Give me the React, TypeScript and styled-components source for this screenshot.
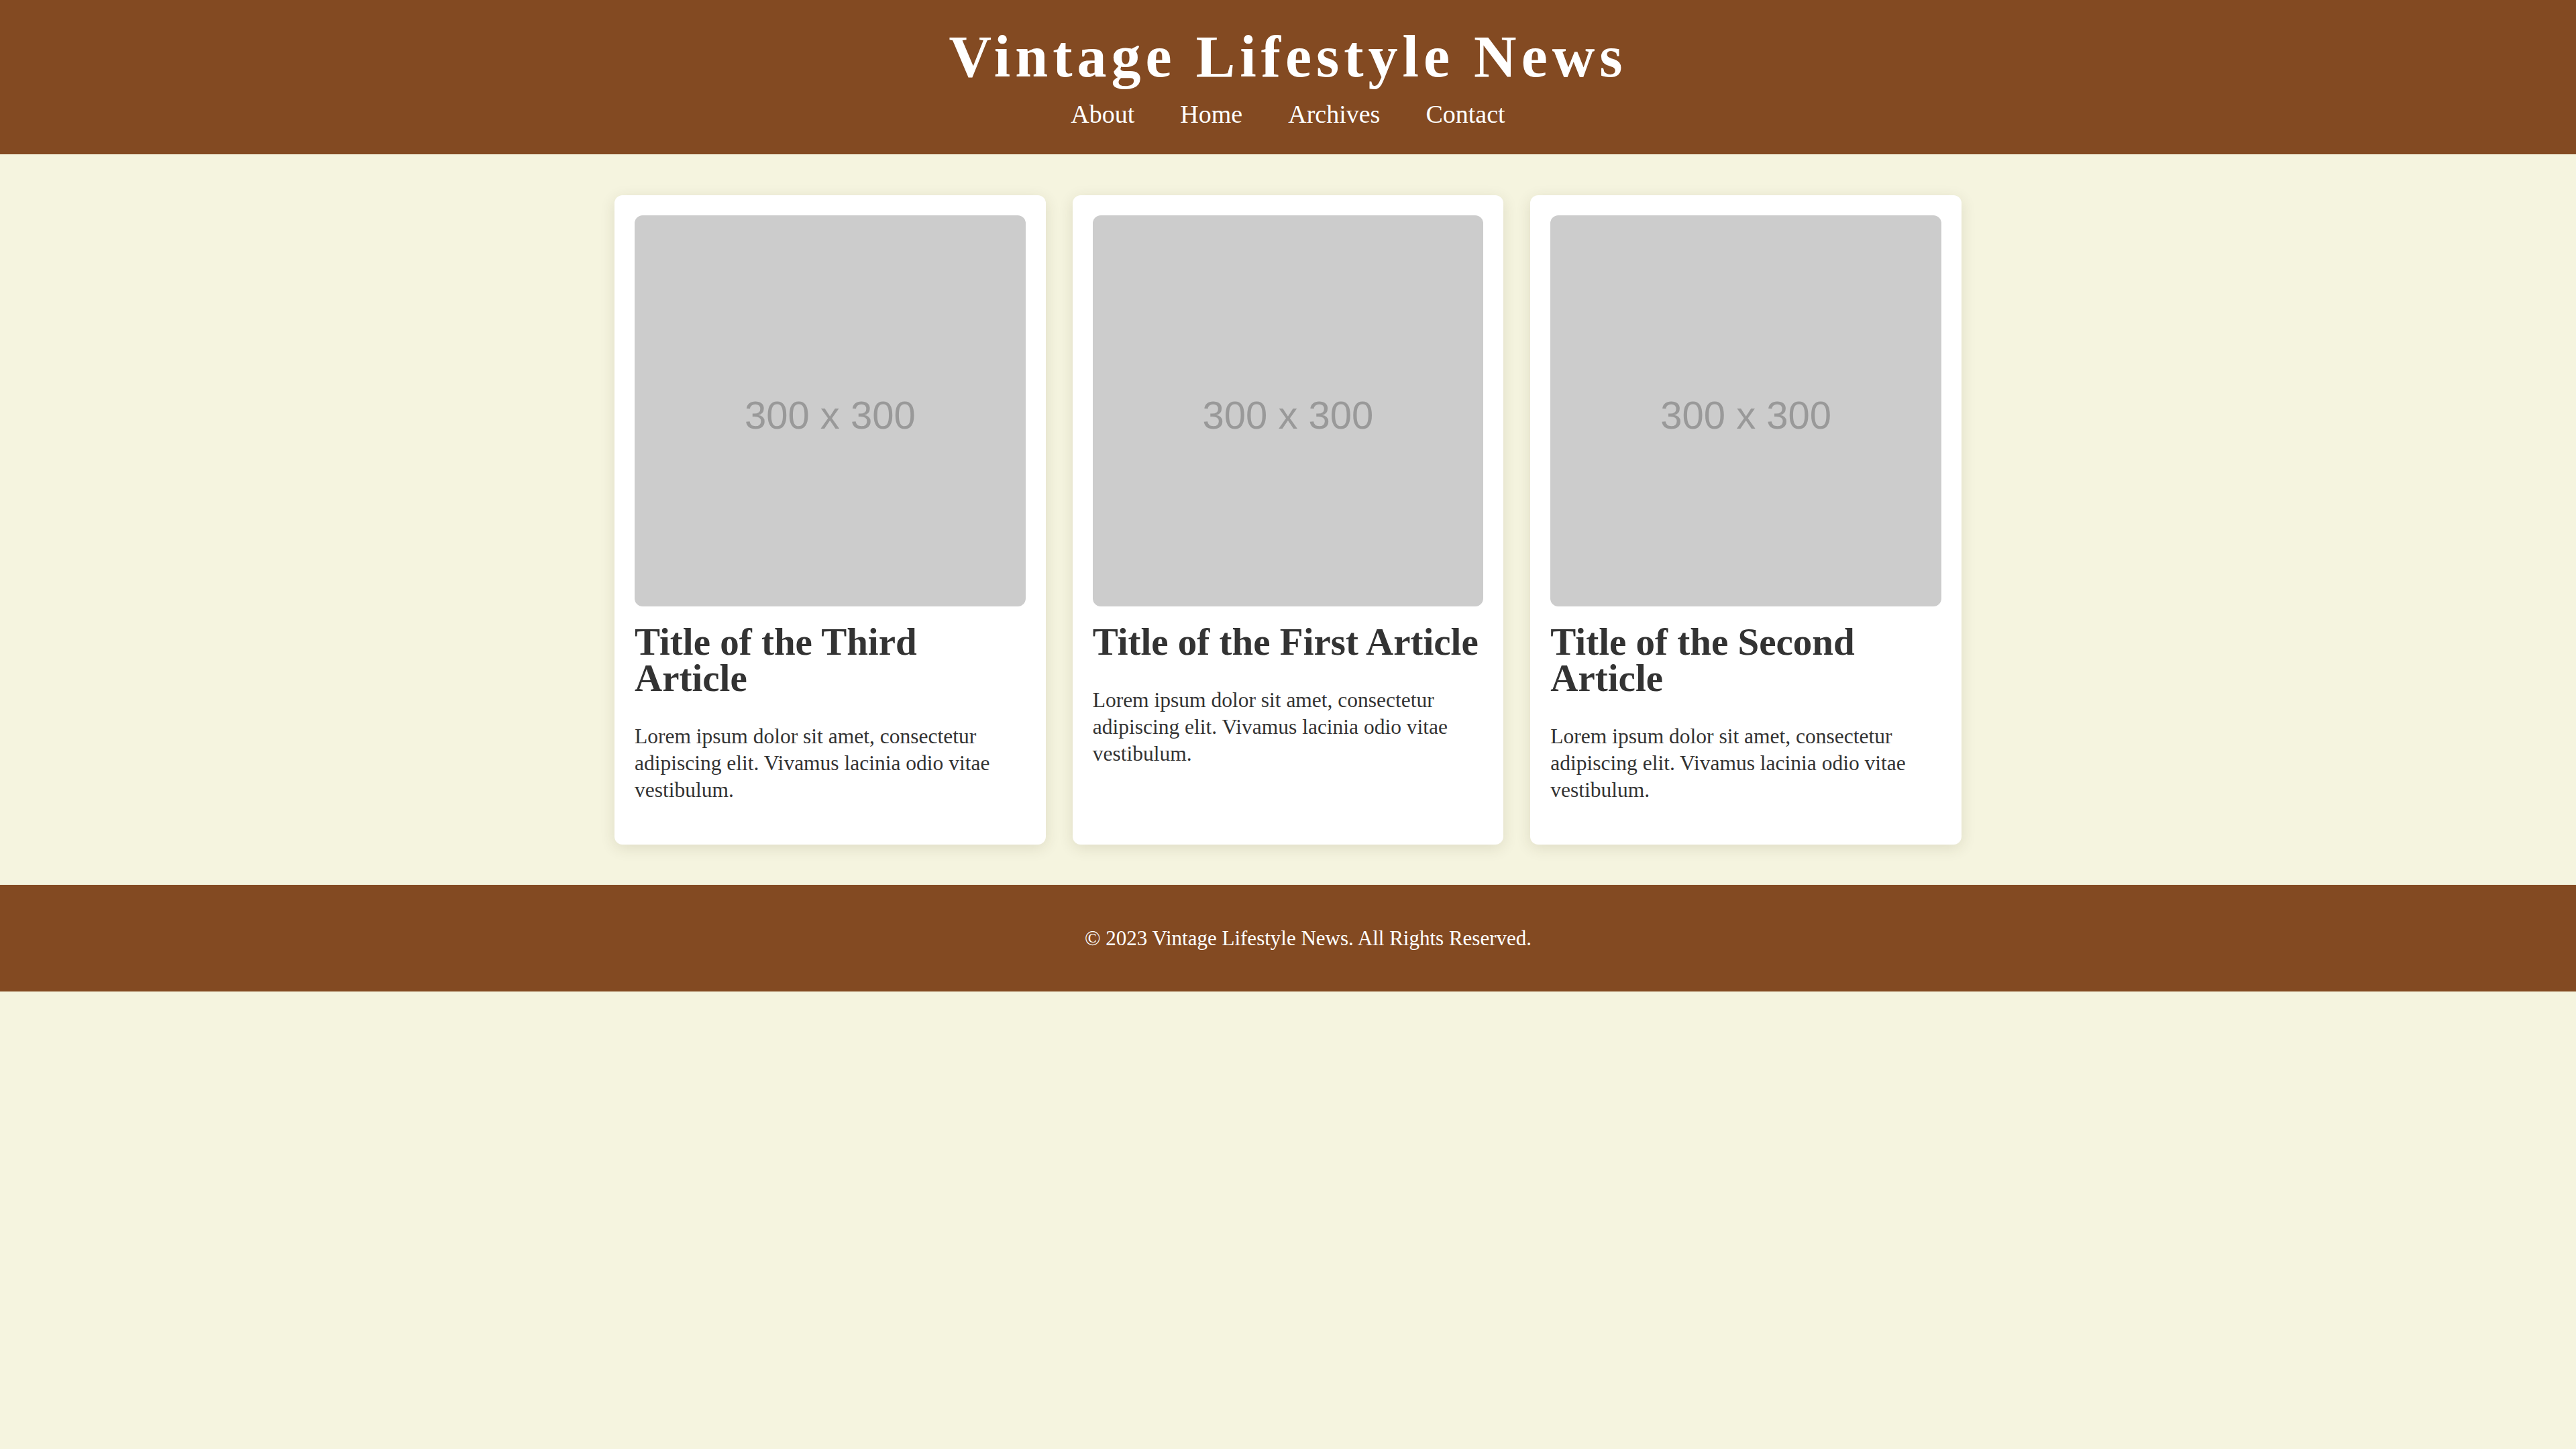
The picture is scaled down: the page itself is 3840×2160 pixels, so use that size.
import React from "react";
import styled, { createGlobalStyle } from "styled-components";

const GlobalStyle = createGlobalStyle`
  html, body {
    margin: 0;
    padding: 0;
    background: #f5f4df;
  }
  body {
    font-family: "Liberation Serif", "Times New Roman", serif;
    color: #333333;
  }
  * { box-sizing: border-box; }
`;

const Page = styled.div`
  min-height: 2160px;
  background: #f5f4df;
`;

const Header = styled.header`
  background: #834a22;
  color: #ffffff;
  padding: 35px 0 38px;
  display: flex;
  flex-direction: column;
  align-items: center;
`;

const SiteTitle = styled.h1`
  margin: 0;
  font-size: 88px;
  line-height: 100px;
  font-weight: 700;
  letter-spacing: 7px;
  text-align: center;
`;

const Nav = styled.nav`
  margin-top: 13px;
  display: flex;
  justify-content: center;
  gap: 68px;
`;

const NavLink = styled.a`
  color: #ffffff;
  text-decoration: none;
  font-size: 38px;
  line-height: 44px;
`;

const Main = styled.main`
  padding: 61px 0 60px;
`;

const Grid = styled.div`
  width: 2008px;
  margin: 0 auto;
  display: grid;
  grid-template-columns: repeat(3, 1fr);
  gap: 40px;
`;

const Card = styled.article`
  background: #ffffff;
  border-radius: 12px;
  padding: 30px;
  box-shadow: 0 5px 22px rgba(60, 50, 0, 0.12);
`;

const Placeholder = styled.div`
  width: 100%;
  aspect-ratio: 1 / 1;
  background: #cccccc;
  border-radius: 12px;
  display: flex;
  align-items: center;
  justify-content: center;
  padding-top: 12px;
  font-family: "Liberation Sans", Arial, sans-serif;
  font-size: 58px;
  color: #999999;
`;

const CardTitle = styled.h2`
  margin: 26px 0 40px;
  font-size: 57px;
  line-height: 54px;
  font-weight: 700;
  color: #333333;
`;

const CardText = styled.p`
  margin: 0 0 31px;
  font-size: 31.5px;
  line-height: 40px;
  color: #333333;
`;

const Footer = styled.footer`
  background: #834a22;
  color: #ffffff;
  padding: 60px 0 59px 60px;
  text-align: center;
  font-size: 31px;
  line-height: 40px;
`;

const articles = [
  "Title of the Third Article",
  "Title of the First Article",
  "Title of the Second Article",
];

const lorem =
  "Lorem ipsum dolor sit amet, consectetur adipiscing elit. Vivamus lacinia odio vitae vestibulum.";

export default function App() {
  return (
    <Page>
      <GlobalStyle />
      <Header>
        <SiteTitle>Vintage Lifestyle News</SiteTitle>
        <Nav>
          <NavLink href="#">About</NavLink>
          <NavLink href="#">Home</NavLink>
          <NavLink href="#">Archives</NavLink>
          <NavLink href="#">Contact</NavLink>
        </Nav>
      </Header>
      <Main>
        <Grid>
          {articles.map((title) => (
            <Card key={title}>
              <Placeholder>300 x 300</Placeholder>
              <CardTitle>{title}</CardTitle>
              <CardText>{lorem}</CardText>
            </Card>
          ))}
        </Grid>
      </Main>
      <Footer>© 2023 Vintage Lifestyle News. All Rights Reserved.</Footer>
    </Page>
  );
}
